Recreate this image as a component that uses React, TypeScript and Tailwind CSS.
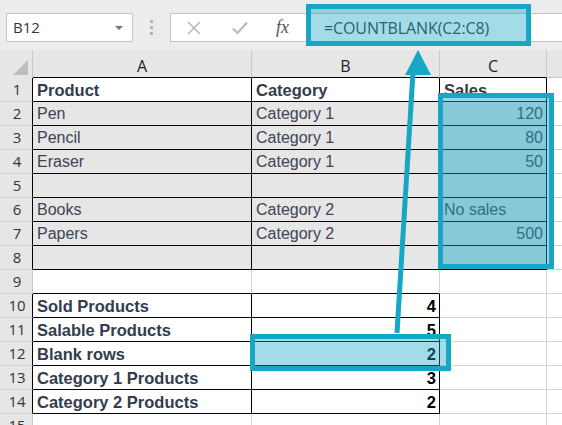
import React from 'react';

type Cell = { text?: string; bold?: boolean; right?: boolean };

const colWidths = [219, 188, 107, 64];
// column D is mostly off-screen, its letter never shows
const colNames = ['A', 'B', 'C', ''];

const data: Record<number, Cell[]> = {
  1: [{ text: 'Product', bold: true }, { text: 'Category', bold: true }, { text: 'Sales', bold: true }],
  2: [{ text: 'Pen' }, { text: 'Category 1' }, { text: '120', right: true }],
  3: [{ text: 'Pencil' }, { text: 'Category 1' }, { text: '80', right: true }],
  4: [{ text: 'Eraser' }, { text: 'Category 1' }, { text: '50', right: true }],
  5: [{}, {}, {}],
  6: [{ text: 'Books' }, { text: 'Category 2' }, { text: 'No sales' }],
  7: [{ text: 'Papers' }, { text: 'Category 2' }, { text: '500', right: true }],
  8: [{}, {}, {}],
  10: [{ text: 'Sold Products', bold: true }, { text: '4', bold: true, right: true }],
  11: [{ text: 'Salable Products', bold: true }, { text: '5', bold: true, right: true }],
  12: [{ text: 'Blank rows', bold: true }, { text: '2', bold: true, right: true }],
  13: [{ text: 'Category 1 Products', bold: true }, { text: '3', bold: true, right: true }],
  14: [{ text: 'Category 2 Products', bold: true }, { text: '2', bold: true, right: true }],
};

const inTable = (r: number, c: number) =>
  (r >= 1 && r <= 8 && c >= 0 && c <= 2) || (r >= 10 && r <= 14 && c >= 0 && c <= 1);

const grayFill = (r: number, c: number) => r >= 2 && r <= 8 && c <= 2;

const rows = Array.from({ length: 15 }, (_, i) => i + 1);

const Toolbar = () => (
  <div className="flex h-[50px] items-start bg-[#ececec] pt-[13px]">
    <div className="ml-[6px] flex h-[29px] w-[127px] shrink-0 items-center justify-between border border-[#c6c6c6] bg-white pl-[6px] pr-[9px]">
      <span className="font-['Open_Sans'] text-[15px] text-[#333]">B12</span>
      <span className="h-0 w-0 border-x-[4px] border-t-[4px] border-x-transparent border-t-[#777]" />
    </div>
    <div className="flex h-[29px] w-[37px] shrink-0 flex-col items-center justify-center gap-[3px]">
      <span className="h-[3px] w-[3px] bg-[#b5b5b5]" />
      <span className="h-[3px] w-[3px] bg-[#b5b5b5]" />
      <span className="h-[3px] w-[3px] bg-[#b5b5b5]" />
    </div>
    <div className="flex h-[29px] flex-1 items-center border border-r-0 border-[#c6c6c6] bg-white">
      <svg width="14" height="14" viewBox="0 0 14 14" className="ml-[16px] shrink-0">
        <path d="M1 1 L13 13 M13 1 L1 13" stroke="#b3b3b3" strokeWidth="1.4" fill="none" />
      </svg>
      <svg width="16" height="14" viewBox="0 0 16 14" className="ml-[31px] shrink-0">
        <path d="M1 7.5 L5.5 12 L15 1.5" stroke="#b8b8b8" strokeWidth="2" fill="none" />
      </svg>
      <span className="ml-[28px] font-['Liberation_Serif'] text-[18px] italic text-[#555]">fx</span>
      <span className="ml-[35px] whitespace-nowrap font-['Open_Sans'] text-[16px] tracking-[-0.1px] text-[#333]">
        =COUNTBLANK(C2:C8)
      </span>
    </div>
  </div>
);

const ColumnHeader = () => (
  <div className="flex h-[28px] bg-[#e6e6e6]">
    <div className="relative w-[33px] shrink-0 border-r border-[#c8c8c8]">
      <div className="absolute bottom-[3px] right-[4px] h-0 w-0 border-b-[15px] border-l-[15px] border-b-[#bdbdbd] border-l-transparent" />
    </div>
    {colNames.map((n, c) => (
      <div
        key={c}
        style={{ width: colWidths[c] }}
        className={`flex shrink-0 items-center justify-center border-r border-[#c8c8c8] pt-[4px] font-['Open_Sans'] text-[16px] text-[#222] ${
          inTable(1, c) ? 'border-b border-b-black' : 'border-b border-b-[#c8c8c8]'
        }`}
      >
        {n}
      </div>
    ))}
  </div>
);

const Grid = () => (
  <div>
    {rows.map((r) => (
      <div key={r} className="flex h-[24px]">
        <div
          className={`flex w-[33px] shrink-0 items-center justify-center border-b border-r border-b-[#d0d0d0] bg-[#e6e6e6] pl-[2px] font-['Open_Sans'] text-[15px] text-[#333] ${
            inTable(r, 0) ? 'border-r-black' : 'border-r-[#c8c8c8]'
          }`}
        >
          {r}
        </div>
        {colWidths.map((w, c) => {
          const cell = data[r]?.[c] ?? {};
          const rightBlack = inTable(r, c) || inTable(r, c + 1);
          const bottomBlack = inTable(r, c) || inTable(r + 1, c);
          return (
            <div
              key={c}
              style={{ width: w }}
              className={`flex shrink-0 items-center overflow-hidden whitespace-nowrap border-b border-r px-[3px] pl-[4px] font-['Liberation_Sans'] leading-[24px] ${
                rightBlack ? 'border-r-black' : 'border-r-[#d4d4d4]'
              } ${bottomBlack ? 'border-b-black' : 'border-b-[#d4d4d4]'} ${
                grayFill(r, c) ? 'bg-[#e6e6e6]' : 'bg-white'
              } ${cell.right ? 'justify-end' : 'justify-start'} ${
                cell.bold
                  ? cell.right
                    ? 'text-[16.5px] font-bold text-black'
                    : 'text-[16.5px] font-bold text-[#333c4c]'
                  : 'text-[16px] text-[#3b4454]'
              }`}
            >
              {cell.text}
            </div>
          );
        })}
      </div>
    ))}
  </div>
);

export default function App() {
  return (
    <div className="relative h-[425px] w-[562px] overflow-hidden bg-white">
      <Toolbar />
      <ColumnHeader />
      <Grid />

      {/* highlight boxes */}
      <div className="absolute left-[306px] top-[4px] h-[42px] w-[225px] border-[5px] border-[#17a6c4] bg-[#19a7c5]/40" />
      <div className="absolute left-[438px] top-[93px] h-[176px] w-[116px] border-[5px] border-[#17a6c4] bg-[#19a7c5]/45" />
      <div className="absolute left-[250px] top-[334px] h-[37px] w-[201px] border-[5px] border-[#17a6c4] bg-[#19a7c5]/40" />

      {/* arrow */}
      <svg className="absolute left-0 top-0" width="562" height="425" viewBox="0 0 562 425">
        <path d="M397 333 L413 72" stroke="#17a7c4" strokeWidth="5" fill="none" />
        <polygon points="418,50 405,75 431,75" fill="#17a7c4" />
      </svg>
    </div>
  );
}
